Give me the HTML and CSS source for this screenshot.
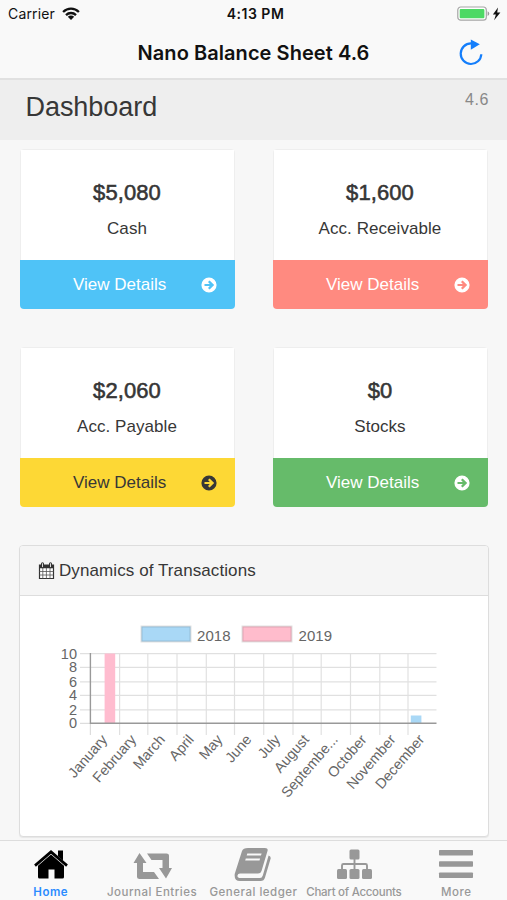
FILE: index.html
```
<!DOCTYPE html>
<html lang="en">
<head>
<meta charset="utf-8">
<title>Nano Balance Sheet 4.6</title>
<link rel="stylesheet" href="styles.css">
</head>
<body>
<svg width="0" height="0" class="defs">
  <symbol id="arrow" viewBox="0 0 16 16"><path fill="currentColor" fill-rule="evenodd" d="M8 .4a7.6 7.6 0 1 1 0 15.2A7.6 7.6 0 0 1 8 .4ZM13.2 8 8.6 3.4 7 5l1.8 1.9H3.5v2.2h5.3L7 11l1.6 1.6Z"/></symbol>
</svg>
<header class="top">
  <div class="status">
    <div class="carrier"><span>Carrier</span>
      <svg class="wifi" viewBox="0 0 18 13" width="18" height="13"><g fill="none" stroke="#111" stroke-width="2.3"><path d="M1.1 5C5.6.5 12.4.5 16.9 5"/><path d="M4 8.1c2.9-2.8 7.1-2.8 10 0"/></g><path fill="#111" d="M9 13 5.8 9.8c1.8-1.7 4.6-1.7 6.4 0Z"/></svg>
    </div>
    <div class="clock">4:13 PM</div>
    <div class="power">
      <svg viewBox="0 0 46 16" width="46" height="16"><rect x=".8" y="1" width="28.5" height="13.2" rx="3" fill="#fff" stroke="#a5a5a5" stroke-width="1.2"/><rect x="2.7" y="2.9" width="24.7" height="9.4" rx="1" fill="#4cd964"/><path d="M30.6 5.3q1.7 1 1.7 2.4t-1.7 2.4Z" fill="#999"/><path d="m41 1.5-5.1 7h3l-1.8 5.8 6.3-7.7h-3.2Z" fill="#111"/></svg>
    </div>
  </div>
  <div class="nav">
    <h1>Nano Balance Sheet 4.6</h1>
    <svg class="reload" viewBox="0 0 24 28" width="24" height="28"><path d="M12 4.4A10.3 10.3 0 1 0 22.3 15.2" fill="none" stroke="#147efb" stroke-width="2.2"/><path d="M11.8.5V10.8L20.8 5.3Z" fill="#147efb"/></svg>
  </div>
</header>
<section class="heading"><h2>Dashboard</h2><span>4.6</span></section>
<main>
  <div class="cards">
    <article class="card"><div class="body"><strong>$5,080</strong><p>Cash</p></div><a class="details blue"><span>View Details</span><svg><use href="#arrow"/></svg></a></article>
    <article class="card"><div class="body"><strong>$1,600</strong><p>Acc. Receivable</p></div><a class="details red"><span>View Details</span><svg><use href="#arrow"/></svg></a></article>
    <article class="card"><div class="body"><strong>$2,060</strong><p>Acc. Payable</p></div><a class="details yellow"><span>View Details</span><svg><use href="#arrow"/></svg></a></article>
    <article class="card"><div class="body"><strong>$0</strong><p>Stocks</p></div><a class="details green"><span>View Details</span><svg><use href="#arrow"/></svg></a></article>
  </div>
  <section class="panel">
    <h3>
      <svg viewBox="0 0 17 18" width="17" height="18"><path d="M1.5 3h14v13.5h-14Z" fill="#fff" stroke="#333" stroke-width="1.2"/><path d="M1 3h15v3.2H1Z" fill="#333"/><path d="M4.8 6v10.5M8.4 6v10.5M12 6v10.5M1.5 9.5h14M1.5 13h14" stroke="#555" stroke-width=".8"/><path d="M4.5 1.7v3M12.5 1.7v3" stroke="#333" stroke-width="3" stroke-linecap="round"/><path d="M4.5 1.7v3M12.5 1.7v3" stroke="#ddd" stroke-width="1" stroke-linecap="round"/></svg>
      <span>Dynamics of Transactions</span>
    </h3>
    <svg class="chart" viewBox="20 596 467 240" width="467" height="240">
      <g stroke-width="2" stroke="#000" stroke-opacity=".12">
        <rect x="141.5" y="626.5" width="49" height="15" fill="#a9d8f6"/>
        <rect x="242.5" y="626.5" width="49" height="15" fill="#ffbccc"/>
      </g>
      <text x="197" y="641.3" textLength="33.5">2018</text>
      <text x="298.5" y="641.3" textLength="33.5">2019</text>
      <path class="grid" d="M80 653.6H436.5M80 667.4H436.5M80 681.9H436.5M80 695.4H436.5M80 709.8H436.5M119.6 653V735M147.8 653V735M177 653V735M206.3 653V735M234.5 653V735M263.7 653V735M293 653V735M321.2 653V735M350.5 653V735M379.8 653V735M408 653V735"/>
      <path class="axis-tail" d="M90.4 723V735M80 723.3H90"/>
      <path d="M104.6 653.5h10.6v69.5h-10.6Z" fill="#ffbccf"/>
      <path d="M410.8 715.5h10.6v7.5h-10.6Z" fill="#a9d8f6"/>
      <path class="axis" d="M90.4 653V723.3H436.5"/>
      <g class="values" text-anchor="end">
        <text x="77" y="658.5">10</text><text x="77" y="672">8</text><text x="77" y="686.5">6</text><text x="77" y="700.2">4</text><text x="77" y="714.7">2</text><text x="77" y="728.2">0</text>
      </g>
      <g class="months" text-anchor="end">
        <text transform="translate(108 740) rotate(-49)">January</text>
        <text transform="translate(136.9 740) rotate(-49)">February</text>
        <text transform="translate(165.7 740) rotate(-49)">March</text>
        <text transform="translate(194.5 740) rotate(-49)">April</text>
        <text transform="translate(223.3 740) rotate(-49)">May</text>
        <text transform="translate(252.2 740) rotate(-49)">June</text>
        <text transform="translate(281 740) rotate(-49)">July</text>
        <text transform="translate(309.9 740) rotate(-49)">August</text>
        <text transform="translate(338.7 740) rotate(-49)">Septembe...</text>
        <text transform="translate(367.5 740) rotate(-49)">October</text>
        <text transform="translate(396.5 740) rotate(-49)">November</text>
        <text transform="translate(425.2 740) rotate(-49)">December</text>
      </g>
    </svg>
  </section>
</main>
<nav class="tabs">
  <a class="tab active"><svg viewBox="0 0 40 36" width="40" height="36"><path d="M20 8.6 33 19.8V31q0 1.5-1.5 1.5H23.5V23.5h-6v9H8.5Q7 32.5 7 31V19.8Z"/><path d="M4 19.6 20 5.9 36 19.6" fill="none" stroke="currentColor" stroke-width="2.7"/><path d="M27 4.5h5v10l-5-4.2Z"/></svg><span>Home</span></a>
  <a class="tab"><svg viewBox="0 0 40 36" width="40" height="36"><path d="M7.5 7 14.5 17H11V26H22L27 33H7.500Q5 33 5 31V17H1.500ZM15 7.500H34.500Q37 7.500 37 9.500V22H40L34 32.500 27 22H30.500V14H19.500Z"/></svg><span>Journal Entries</span></a>
  <a class="tab"><svg viewBox="0 0 40 36" width="40" height="36"><path fill-rule="evenodd" d="M15 2H32Q35.500 2 34.500 5L28.500 25Q27.700 27.500 25 27.500H7Q4.800 27.500 4.500 29.500C4.200 31.500 5.500 32 7.500 32H27Q29 32 29.800 29.500L35.600 9.600Q38.400 10.500 37.500 13L32 31.500Q31 35 27.500 35H7Q1 35 1.700 28L9 5Q10 2 15 2ZM14.300 7.500 13.700 9.500H28L28.600 7.500ZM12.800 12.500 12.200 14.500H26.500L27.100 12.500Z"/></svg><span class="ledger">General ledger</span></a>
  <a class="tab"><svg viewBox="0 0 40 36" width="40" height="36"><rect x="14.500" y="3.500" width="10" height="10" rx="1.500"/><rect x="2" y="23" width="10" height="10" rx="1.500"/><rect x="14.500" y="23" width="10" height="10" rx="1.500"/><rect x="27" y="23" width="10" height="10" rx="1.500"/><path d="M19.500 13V24M7 24V19.500Q7 18 8.500 18H30.500Q32 18 32 19.500V24" fill="none" stroke="currentColor" stroke-width="1.900"/></svg><span class="accounts">Chart of Accounts</span></a>
  <a class="tab"><svg viewBox="0 0 40 36" width="40" height="36"><rect x="3" y="4" width="34" height="5.500" rx=".8"/><rect x="3" y="15.200" width="34" height="5.500" rx=".8"/><rect x="3" y="26.500" width="34" height="5.500" rx=".8"/></svg><span>More</span></a>
</nav>
</body>
</html>
```
FILE: styles.css
```
* { box-sizing: border-box; }
body {
  margin: 0;
  height: 900px;
  overflow: hidden;
  display: flex;
  flex-direction: column;
  background: #f7f7f7;
  color: #373737;
  font-family: "Liberation Sans", Arial, sans-serif;
}
h1, h2, h3, p { margin: 0; font-weight: 400; }
.defs { display: block; flex: none; height: 0; }
.top {
  height: 80px;
  flex: none;
  background: #f9f9f9;
  border-bottom: 2px solid #e1e1e1;
  font-family: Inter, sans-serif;
  color: #111;
}
.status {
  display: grid;
  grid-template-columns: 1fr auto 1fr;
  height: 27px;
  padding: 0 4px 0 8px;
  align-items: center;
  font-size: 14px;
}
.carrier { display: flex; align-items: center; gap: 7px; letter-spacing: .15px; }
.clock { font-weight: 600; font-size: 14px; letter-spacing: .5px; }
.power { display: flex; justify-content: flex-end; }
.nav {
  display: grid;
  grid-template-columns: 48px 1fr 48px;
  height: 51px;
  align-items: center;
}
.nav h1 {
  grid-column: 2;
  text-align: center;
  font-size: 20px;
  font-weight: 600;
  letter-spacing: .06px;
}
.heading {
  flex: none;
  height: 60px;
  background: #eee;
  display: flex;
  justify-content: space-between;
  padding: 10px 18px 0 25.5px;
}
.heading h2 { font-size: 27px; line-height: 34px; letter-spacing: -.05px; }
.heading span { font-size: 16px; line-height: 19px; color: #888; letter-spacing: .6px; }
main { flex: 1; min-height: 0; padding: 9px 19px 3px 20px; }
.cards {
  display: grid;
  grid-template-columns: 215px 215px;
  justify-content: space-between;
  row-gap: 38px;
}
.card {
  height: 160px;
  display: flex;
  flex-direction: column;
  background: #fff;
  border-radius: 4px;
  overflow: hidden;
}
.body {
  height: 110.5px;
  padding: 29px 1px 0 0;
  text-align: center;
  border: 1px solid #eee;
  border-bottom: 0;
}
.body strong {
  display: block;
  font-size: 22px;
  line-height: 27px;
  font-weight: 400;
  letter-spacing: .1px;
  -webkit-text-stroke: .55px #333;
}
.body p { margin-top: 12px; font-size: 17px; line-height: 22px; letter-spacing: .06px; }
.details {
  flex: 1;
  display: flex;
  align-items: center;
  justify-content: space-between;
  padding: 1px 18px 0 53px;
  color: #fff;
  font-size: 17px;
}
.details svg { width: 16px; height: 16px; }
.blue { background: #4fc3f7; }
.red { background: #ff8a80; }
.yellow { background: #fdd835; color: #373737; }
.green { background: #66bb6a; }
.panel {
  margin: 38px 0 0 -1px;
  width: 470px;
  height: 292px;
  background: #fff;
  border: 1px solid #ddd;
  border-radius: 4px;
  box-shadow: 0 1px 1px #0001;
  overflow: hidden;
}
.panel h3 {
  height: 50px;
  display: flex;
  align-items: center;
  gap: 4px;
  padding-left: 18px;
  background: #f5f5f5;
  border-bottom: 1px solid #ddd;
  font-size: 17px;
}
.panel h3 span { letter-spacing: .09px; }
.chart { display: block; }
.chart text { font-size: 15px; fill: #666; }
.chart .values text { font-size: 14.5px; }
.chart .months text { font-size: 14.4px; }
.grid { fill: none; stroke: #000; stroke-opacity: .12; stroke-width: 1.2; }
.axis-tail { fill: none; stroke: #ddd; stroke-width: 1.2; }
.axis { fill: none; stroke: #999; stroke-width: 1.4; }
.tabs {
  flex: none;
  height: 60px;
  display: grid;
  grid-template-columns: repeat(5, 1fr);
  background: #f9f9f9;
  border-top: 1px solid #ddd;
  color: #989898;
  font: 500 11.5px/14px Inter, sans-serif;
}
.tab { display: flex; flex-direction: column; align-items: center; padding-top: 5px; min-width: 0; white-space: nowrap; }
.tab svg { fill: currentColor; flex: none; }
.tab span { margin-top: 3px; letter-spacing: .5px; }
.tab .accounts { letter-spacing: -.28px; margin-left: -2px; }
.active svg { color: #000; }
.active span { color: #2b8cff; font-weight: 600; }
```
